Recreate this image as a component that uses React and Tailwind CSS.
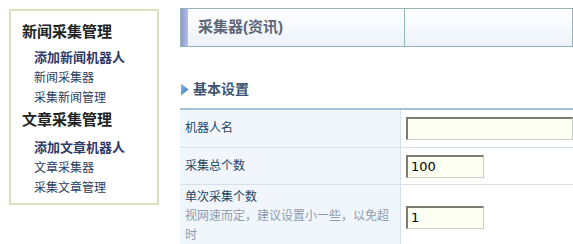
import React from "react";

const font = { fontFamily: '"Liberation Sans", "Noto Sans CJK SC", sans-serif' };

function Sidebar() {
  const groups = [
    { title: "新闻采集管理", items: ["添加新闻机器人", "新闻采集器", "采集新闻管理"] },
    { title: "文章采集管理", items: ["添加文章机器人", "文章采集器", "采集文章管理"] },
  ];
  return (
    <div className="ml-[9px] mt-[9px] w-[150px] h-[196px] shrink-0 border-2 border-[#d9e3bd] bg-white pl-[11px] pt-[11px]">
      {groups.map((g, gi) => (
        <div key={g.title} className={gi ? "mt-[2px]" : ""}>
          <div className="text-[15px] leading-[20px] font-bold text-[#222]">{g.title}</div>
          <ul className={`${gi ? "mt-[8px]" : "mt-[6px]"} pl-[12px]`}>
            {g.items.map((it, i) => (
              <li
                key={it}
                className={`leading-[20px] ${i === 0 ? "text-[13px] font-bold text-[#2f3a6a]" : "text-[12px] text-[#2c3c5c]"}`}
              >
                {it}
              </li>
            ))}
          </ul>
        </div>
      ))}
    </div>
  );
}

function Row({ label, hint, children, tall, first }) {
  return (
    <div className="grid grid-cols-[221px_1fr] border-b border-[#d7e0ea]">
      <div
        className={`bg-[#f1f6fd] border-r border-[#d7e0ea] pl-[5px] pr-[10px] ${
          tall ? "pt-[3px] pb-[2px]" : first ? "h-[37px] flex items-center" : "h-[36px] flex items-center"
        }`}
      >
        <div>
          <div className="text-[12px] leading-[19px] text-[#1d4565]">{label}</div>
          {hint && <div className="text-[12px] leading-[19px] text-[#8f9caa]">{hint}</div>}
        </div>
      </div>
      <div className={`pl-[5px] flex items-center ${tall ? "pt-[2px]" : ""}`}>{children}</div>
    </div>
  );
}

function Field({ value, wide }) {
  return (
    <input
      readOnly
      value={value}
      className={`h-[23px] ${wide ? "w-full" : "w-[78px]"} bg-[#fefff3] border border-[#c9cfc6] border-t-[#7c7c72] border-l-[#7c7c72] border-t-2 border-l-2 px-[3px] text-[13px] text-black outline-none`}
      style={{ fontFamily: '"DejaVu Sans", sans-serif' }}
    />
  );
}

export default function App() {
  return (
    <div className="w-[573px] h-[244px] overflow-hidden bg-white flex" style={font}>
      <Sidebar />
      <div className="ml-[21px] flex-1 min-w-0">
        {/* header */}
        <div className="mt-[8px] h-[39px] border border-[#93b7ba] grid grid-cols-[224px_1fr] bg-gradient-to-b from-white to-[#edf2fa]">
          <div className="flex border-r border-[#93b7ba]">
            <div className="w-[7px] bg-gradient-to-r from-[#8e96d0] to-[#b7bde6]" />
            <div className="pl-[10px] flex items-center text-[15px] font-bold text-[#5a6678]">采集器(资讯)</div>
          </div>
          <div />
        </div>

        {/* section title */}
        <div className="mt-[33px] flex items-center gap-[4px] h-[18px]">
          <svg width="9" height="13" viewBox="0 0 9 13">
            <defs>
              <linearGradient id="tri" x1="0" y1="0" x2="1" y2="1">
                <stop offset="0" stopColor="#8fc0ee" />
                <stop offset="1" stopColor="#2d6fb8" />
              </linearGradient>
            </defs>
            <path d="M1 0.5 L8.5 6.5 L1 12.5 Z" fill="url(#tri)" />
          </svg>
          <span className="text-[14px] font-bold text-[#3f5573]">基本设置</span>
        </div>

        {/* table */}
        <div className="mt-[10px] border-t-2 border-[#a3c0d6]">
          <Row label="机器人名" first>
            <Field value="" wide />
          </Row>
          <Row label="采集总个数">
            <Field value="100" />
          </Row>
          <Row label="单次采集个数" hint="视网速而定，建议设置小一些，以免超时" tall>
            <Field value="1" />
          </Row>
        </div>
      </div>
    </div>
  );
}
